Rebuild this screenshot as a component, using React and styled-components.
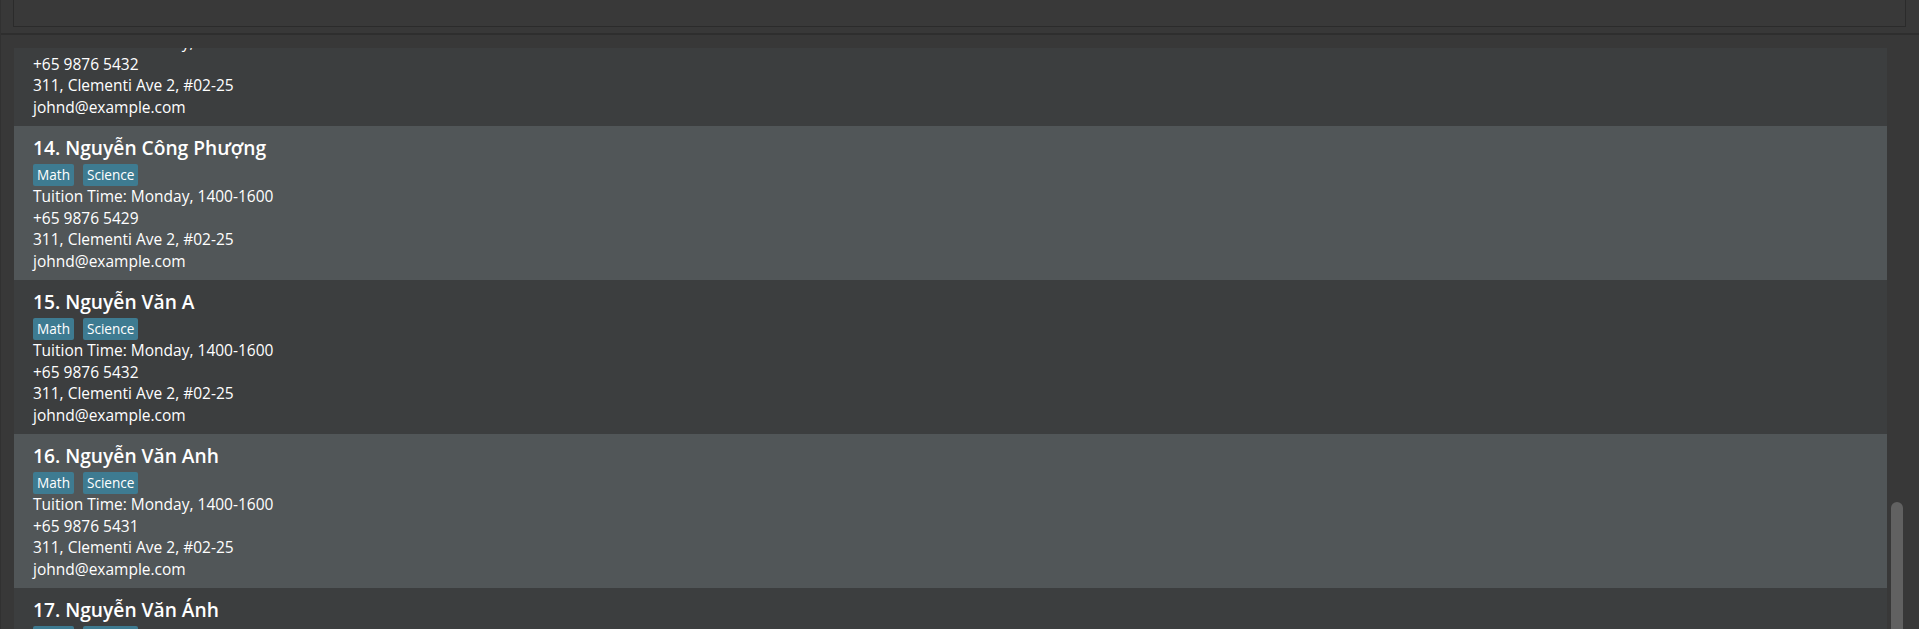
import React from 'react'
import styled, { createGlobalStyle } from 'styled-components'

const GlobalStyle = createGlobalStyle`
  html, body {
    margin: 0;
    padding: 0;
    background: #383838;
  }
  * {
    box-sizing: border-box;
  }
`

const Window = styled.div`
  width: 100%;
  height: 629px;
  background: #383838;
  border-left: 1px solid #313131;
  display: flex;
  flex-direction: column;
  overflow: hidden;
  font-family: "Open Sans", "Noto Sans", sans-serif;
`

const ResultBox = styled.div`
  margin: 0 13px 0 12px;
  height: 27px;
  flex-shrink: 0;
  background: #393939;
  border: 1px solid #2b2b2b;
  border-top: none;
`

const Divider = styled.div`
  margin-top: 6px;
  height: 2px;
  flex-shrink: 0;
  background: #2e2e2e;
`

const ListArea = styled.div`
  flex: 1;
  min-height: 0;
  display: flex;
  padding: 13px 0 0 13px;
`

const Viewport = styled.div`
  flex: 1;
  min-width: 0;
  overflow: hidden;
`

const Cards = styled.div`
  display: flex;
  flex-direction: column;
  margin-top: -76px;
`

const Card = styled.div`
  height: 154px;
  flex-shrink: 0;
  padding: 9px 19px 0;
  background: ${p => (p.$even ? '#515658' : '#3c3e3f')};
  color: #ffffff;
`

const Name = styled.div`
  font-size: 19.2px;
  font-weight: 600;
  line-height: 26px;
  white-space: nowrap;
`

const Tags = styled.div`
  display: flex;
  gap: 9px;
  margin-top: 3px;
`

const Tag = styled.span`
  background: #3e7b91;
  color: #ffffff;
  font-size: 13.6px;
  line-height: 20px;
  padding: 1px 4px;
  border-radius: 2px;
`

const Detail = styled.div`
  font-size: 15.5px;
  line-height: 21.7px;
  white-space: nowrap;
`

const ScrollTrack = styled.div`
  width: 32px;
  flex-shrink: 0;
  padding: 454px 16px 0 4px;
  display: flex;
`

const Thumb = styled.div`
  flex: 1;
  background: #616161;
  border-radius: 6px 6px 0 0;
`

const persons = [
  { id: 13, name: 'Nguyễn Công Phương', phone: '+65 9876 5432' },
  { id: 14, name: 'Nguyễn Công Phượng', phone: '+65 9876 5429' },
  { id: 15, name: 'Nguyễn Văn A', phone: '+65 9876 5432' },
  { id: 16, name: 'Nguyễn Văn Anh', phone: '+65 9876 5431' },
  { id: 17, name: 'Nguyễn Văn Ánh', phone: '+65 9876 5430' },
]

function PersonCard({ person }) {
  return (
    <Card $even={person.id % 2 === 0}>
      <Name>{person.id}. {person.name}</Name>
      <Tags>
        <Tag>Math</Tag>
        <Tag>Science</Tag>
      </Tags>
      <Detail>Tuition Time: Monday, 1400-1600</Detail>
      <Detail>{person.phone}</Detail>
      <Detail>311, Clementi Ave 2, #02-25</Detail>
      <Detail>johnd@example.com</Detail>
    </Card>
  )
}

export default function App() {
  return (
    <>
      <GlobalStyle />
      <Window>
        <ResultBox />
        <Divider />
        <ListArea>
          <Viewport>
            <Cards>
              {persons.map(p => (
                <PersonCard key={p.id} person={p} />
              ))}
            </Cards>
          </Viewport>
          <ScrollTrack>
            <Thumb />
          </ScrollTrack>
        </ListArea>
      </Window>
    </>
  )
}
